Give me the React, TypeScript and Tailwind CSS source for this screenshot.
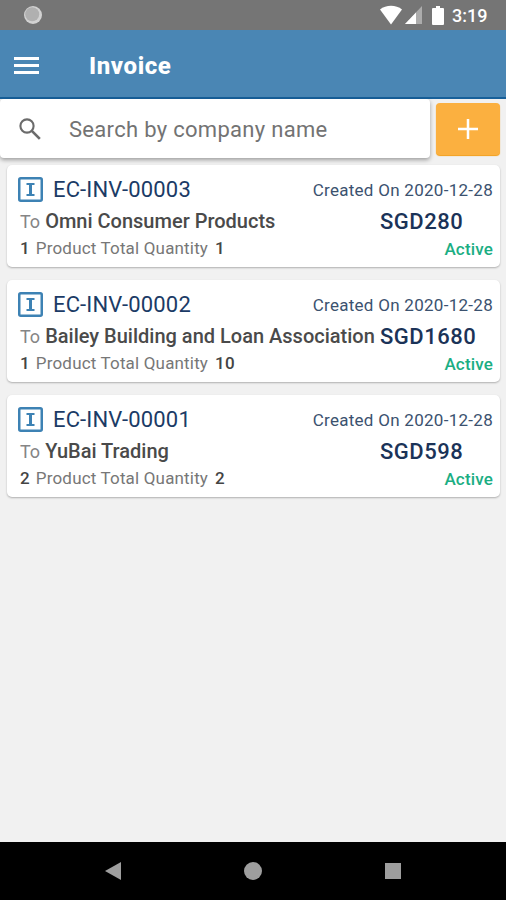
type Invoice = {
  id: string;
  company: string;
  products: number;
  quantity: number;
  date: string;
  total: string;
};

const invoices: Invoice[] = [
  { id: "EC-INV-00003", company: "Omni Consumer Products", products: 1, quantity: 1, date: "2020-12-28", total: "SGD280" },
  { id: "EC-INV-00002", company: "Bailey Building and Loan Association", products: 1, quantity: 10, date: "2020-12-28", total: "SGD1680" },
  { id: "EC-INV-00001", company: "YuBai Trading", products: 2, quantity: 2, date: "2020-12-28", total: "SGD598" },
];

function StatusBar() {
  return (
    <div className="flex h-[30px] shrink-0 items-center bg-[#757575] pl-6 pr-[18px] text-white">
      <svg width="18" height="18" viewBox="0 0 18 18">
        <circle cx="9" cy="9" r="9" fill="#d2d2d2" />
        <circle cx="8.2" cy="8.2" r="7" fill="#b0b0b0" />
      </svg>
      <svg className="ml-auto" width="22" height="20" viewBox="0 0 22 20" fill="white">
        <path d="M11 19.5 0 4.5C6 -.5 16 -.5 22 4.5Z" />
      </svg>
      <svg className="ml-[3px]" width="17" height="18" viewBox="0 0 17 18" fill="white">
        <path d="M17 0v18H0Z" opacity=".4" />
        <path d="M11 6.5V18H0Z" />
      </svg>
      <svg className="ml-[10px]" width="12" height="19" viewBox="0 0 12 19" fill="white">
        <path d="M4 0h4v2h3q1 0 1 1v15q0 1-1 1H1q-1 0-1-1V3q0-1 1-1h3Z" />
      </svg>
      <span className="ml-[8px] mt-[2px] w-[36px] whitespace-nowrap text-[18px] font-medium leading-none">3:19</span>
    </div>
  );
}

function Header() {
  return (
    <header className="flex h-[69px] shrink-0 items-center border-b-2 border-[#17609a] bg-[#4a86b4] pl-[14px] text-white">
      <div className="mt-[3px] flex w-[25px] flex-col gap-[4px]">
        <span className="h-[3px] bg-white" />
        <span className="h-[3px] bg-white" />
        <span className="h-[3px] bg-white" />
      </div>
      <h1 className="ml-[50px] mt-[4px] text-[24px] font-extrabold leading-none tracking-[0.6px]">Invoice</h1>
    </header>
  );
}

function SearchRow() {
  return (
    <div className="flex h-[66px] shrink-0 items-start">
      <div className="flex h-[59px] w-[430px] items-center rounded-[4px] bg-white pl-[19px] shadow-[0_2px_4px_rgba(0,0,0,0.35)]">
        <svg width="22" height="22" viewBox="0 0 22 22" fill="none" stroke="#6b6b6b" strokeWidth="2.1">
          <circle cx="8" cy="8" r="6.6" />
          <path d="m12.8 12.8 8 8" strokeWidth="2.6" />
        </svg>
        <span className="ml-[28px] mt-[2px] whitespace-nowrap text-[22px] leading-none tracking-[0.3px] text-[#737373]">
          Search by company name
        </span>
      </div>
      <button className="ml-[6px] mt-[4px] flex h-[52px] w-16 items-center justify-center rounded-[4px] bg-[#fbb040] shadow-[0_1px_1px_#f39c12]" aria-label="Add invoice">
        <svg width="20" height="20" viewBox="0 0 20 20" stroke="white" strokeWidth="2.5">
          <path d="M10 0v20M0 10h20" />
        </svg>
      </button>
    </div>
  );
}

function InvoiceCard({ invoice }: { invoice: Invoice }) {
  return (
    <article className="ml-[7px] h-[102px] w-[493px] rounded-[5px] bg-white pl-[11px] pr-[7px] pt-[11px] shadow-[0_1px_2px_rgba(0,0,0,0.28)]">
      <div className="flex h-[26px] items-center">
        <svg width="25" height="25" viewBox="0 0 25 25" fill="none" stroke="#3d82b4">
          <rect x="1.25" y="1.25" width="22.5" height="22.5" rx="1.5" strokeWidth="2.5" />
          <path d="M12.5 7v11" strokeWidth="3" />
          <path d="M8.5 7h8M8.5 18h8" strokeWidth="2" />
        </svg>
        <span className="ml-[10px] mt-[2px] whitespace-nowrap text-[22px] leading-none tracking-[0.15px] text-[#1b3b66]">{invoice.id}</span>
        <span className="ml-auto mt-[2px] whitespace-nowrap text-[17px] leading-none tracking-[0.28px] text-[#3b526f]">Created On {invoice.date}</span>
      </div>
      <div className="flex h-[38px] items-center pl-[2px]">
        <p className="w-[360px] whitespace-nowrap text-[20px] leading-none text-[#4a4a4a]">
          <span className="mr-[5px] text-[18px] text-[#858585]">To</span>
          <span className="font-medium">{invoice.company}</span>
        </p>
        <p className="mt-[2px] whitespace-nowrap text-[22px] font-medium leading-none tracking-[0.5px] text-[#1b3358]">{invoice.total}</p>
      </div>
      <div className="flex h-[16px] items-center pl-[2px] text-[17px] leading-none">
        <p className="whitespace-nowrap tracking-[0.17px] text-[#777777]">
          <span className="mr-[6px] font-medium text-[#444444]">{invoice.products}</span>
          Product Total Quantity
          <span className="ml-[7px] font-medium text-[#444444]">{invoice.quantity}</span>
        </p>
        <span className="ml-auto mt-[2px] font-medium tracking-[0.17px] text-[#1bae83]">Active</span>
      </div>
    </article>
  );
}

function NavigationBar() {
  return (
    <nav className="flex h-[58px] shrink-0 items-center justify-between bg-black pl-[105px] pr-[105px]">
      <svg width="16" height="18" viewBox="0 0 16 18">
        <path d="M16 0v18L0 9Z" fill="#9e9e9e" />
      </svg>
      <span className="size-[18px] rounded-full bg-[#9e9e9e]" />
      <span className="size-4 bg-[#9e9e9e]" />
    </nav>
  );
}

export default function App() {
  return (
    <div className="flex h-[900px] w-[506px] flex-col overflow-hidden bg-[#f1f1f1] font-['Roboto',sans-serif]">
      <StatusBar />
      <Header />
      <SearchRow />
      <main className="flex flex-1 flex-col gap-[13px]">
        {invoices.map((invoice) => (
          <InvoiceCard key={invoice.id} invoice={invoice} />
        ))}
      </main>
      <NavigationBar />
    </div>
  );
}
